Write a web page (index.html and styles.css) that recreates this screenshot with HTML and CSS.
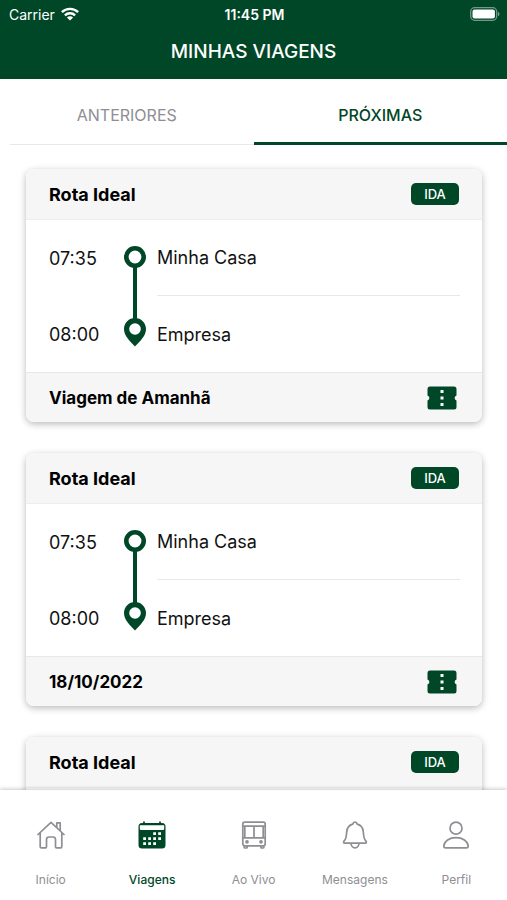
FILE: index.html
```html
<!DOCTYPE html>
<html lang="pt-BR">
<head>
  <meta charset="UTF-8">
  <title>Minhas Viagens</title>
  <meta name="viewport" content="width=device-width, initial-scale=1">
  <link rel="stylesheet" href="styles.css">
</head>
<body>
  <!-- shared icons -->
  <svg class="sprite" aria-hidden="true">
    <symbol id="trajeto" viewBox="0 0 22 102">
      <path d="M11 20v56" fill="none" stroke="currentColor" stroke-width="4"/>
      <circle cx="11" cy="12" r="8.7" fill="#fff" stroke="currentColor" stroke-width="4.6"/>
      <path d="M11 73C5 73 0 77.800 0 84c0 7 6 12 11 17.500C16 96 22 91 22 84c0-6.200-5-11-11-11z" fill="currentColor"/>
      <circle cx="11" cy="84" r="5.800" fill="#fff"/>
    </symbol>
    <symbol id="bilhete" viewBox="0 0 30 24">
      <path d="M3 .5h24a2.500 2.500 0 0 1 2.500 2.500v6.500a2.600 2.600 0 0 0 0 5V21a2.500 2.500 0 0 1-2.500 2.500H3A2.500 2.500 0 0 1 .5 21v-6.500a2.600 2.600 0 0 0 0-5V3A2.500 2.500 0 0 1 3 .5z" fill="currentColor"/>
      <path d="M13.500 4h3v3h-3zM13.500 10.500h3v3h-3zM13.500 17h3v3h-3z" fill="#fff"/>
    </symbol>
  </svg>

  <header class="topo">
    <div class="status">
      <span class="operadora">Carrier
        <svg class="wifi" viewBox="0 0 18 14" aria-hidden="true">
          <g fill="none" stroke="currentColor" stroke-width="2.400">
            <path d="M.9 5.200a11.500 11.500 0 0 1 16.200 0"/>
            <path d="M3.900 8.400a7.200 7.200 0 0 1 10.200 0"/>
          </g>
          <path d="M9 13.600 5.900 10.500a4.400 4.400 0 0 1 6.200 0z" fill="currentColor"/>
        </svg>
      </span>
      <span class="hora">11:45 PM</span>
      <svg class="bateria" viewBox="0 0 30 14" aria-hidden="true">
        <rect x=".7" y=".7" width="26" height="12.600" rx="4" fill="none" stroke="#fff" stroke-opacity=".45" stroke-width="1.300"/>
        <rect x="2.500" y="2.500" width="22.400" height="9" rx="2" fill="#fff"/>
        <path d="M28 4.800c2 .8 2 3.600 0 4.400z" fill="#fff" fill-opacity=".5"/>
      </svg>
    </div>
    <h1>MINHAS VIAGENS</h1>
  </header>

  <div class="abas" role="tablist">
    <button class="aba" role="tab" aria-selected="false">ANTERIORES</button>
    <button class="aba ativa" role="tab" aria-selected="true">PRÓXIMAS</button>
  </div>

  <main class="viagens">
    <article class="card">
      <div class="card-topo">
        <h2>Rota Ideal</h2>
        <span class="tag">IDA</span>
      </div>
      <div class="rota">
        <div class="horas"><span>07:35</span><span>08:00</span></div>
        <svg class="trajeto" aria-hidden="true"><use href="#trajeto"/></svg>
        <div class="locais"><span>Minha Casa</span><span>Empresa</span></div>
      </div>
      <div class="card-base">
        <strong>Viagem de Amanhã</strong>
        <button class="bilhete" aria-label="Ver bilhete"><svg><use href="#bilhete"/></svg></button>
      </div>
    </article>

    <article class="card">
      <div class="card-topo">
        <h2>Rota Ideal</h2>
        <span class="tag">IDA</span>
      </div>
      <div class="rota">
        <div class="horas"><span>07:35</span><span>08:00</span></div>
        <svg class="trajeto" aria-hidden="true"><use href="#trajeto"/></svg>
        <div class="locais"><span>Minha Casa</span><span>Empresa</span></div>
      </div>
      <div class="card-base">
        <strong>18/10/2022</strong>
        <button class="bilhete" aria-label="Ver bilhete"><svg><use href="#bilhete"/></svg></button>
      </div>
    </article>

    <article class="card">
      <div class="card-topo">
        <h2>Rota Ideal</h2>
        <span class="tag">IDA</span>
      </div>
      <div class="rota"></div>
    </article>
  </main>

  <nav class="menu">
    <a href="#inicio">
      <svg viewBox="0 0 28 28" aria-hidden="true">
        <path d="M1 13.500 14 1.300l13 12.200M3.200 12v13.800a1 1 0 0 0 1 1h4.300a1 1 0 0 0 1-1v-7.300a2.500 2.500 0 0 1 2.500-2.500h4a2.500 2.500 0 0 1 2.500 2.500v7.300a1 1 0 0 0 1 1h4.300a1 1 0 0 0 1-1V12M19.800 6.500V1.900h3.400v7.800"/>
      </svg>
      Início
    </a>
    <a href="#viagens" class="ativo" aria-current="page">
      <svg viewBox="0 0 28 28" aria-hidden="true">
        <rect x=".5" y="2" width="27" height="25.500" rx="3.500" fill="currentColor" stroke="none"/>
        <path d="M6 1v3M22 1v3"/>
        <path d="M1.800 4.300h24.400v3.500q0 1.200-1.200 1.200H3q-1.200 0-1.200-1.200z" fill="#fff" stroke="none"/>
        <path d="M15.200 11.300H18v2.800h-2.800zM20.200 11.300H23v2.800h-2.800zM5.200 16.300H8v2.800H5.200zM10.200 16.300H13v2.800h-2.800zM15.200 16.300H18v2.800h-2.800zM20.200 16.300H23v2.800h-2.800zM5.200 21.300H8v2.800H5.200zM10.200 21.300H13v2.800h-2.800zM15.200 21.300H18v2.800h-2.800z" fill="#fff" stroke="none"/>
      </svg>
      Viagens
    </a>
    <a href="#aovivo">
      <svg viewBox="0 0 28 28" aria-hidden="true">
        <rect x="2.800" y="1.200" width="22.400" height="23.600" rx="2"/>
        <path d="M2.800 5.200h22.400M4.800 5.200v11.600M23.200 5.200v11.600M14 5.200v11.600M2.800 16.800h22.400M4.200 25v1.300q0 .7.700.7h1.600q.7 0 .7-.7V25M20.800 25v1.300q0 .7.700.7h1.600q.7 0 .7-.7V25"/>
        <circle cx="7" cy="20.800" r="1"/>
        <circle cx="21" cy="20.800" r="1"/>
      </svg>
      Ao Vivo
    </a>
    <a href="#mensagens">
      <svg viewBox="0 0 28 28" aria-hidden="true">
        <path d="M14 1.200c-1.300 0-2 .8-2.200 1.900C8 4 6 7 5.700 11c-.3 5-.6 7.300-2.600 9-.8.700-.6 2.200.6 2.200h20.600c1.200 0 1.400-1.500.6-2.200-2-1.700-2.300-4-2.600-9-.3-4-2.300-7-6.100-7.900-.2-1.100-.9-1.900-2.200-1.900zM10 22.300a4 4.500 0 0 0 8 0"/>
      </svg>
      Mensagens
    </a>
    <a href="#perfil">
      <svg viewBox="0 0 28 28" aria-hidden="true">
        <circle cx="14" cy="7.200" r="6"/>
        <path d="M3.600 26.800h20.800q1.800 0 1.800-1.800C25.800 20 20.500 16.600 14 16.600S2.200 20 1.800 25q0 1.800 1.800 1.800z"/>
      </svg>
      Perfil
    </a>
  </nav>
</body>
</html>
```
FILE: styles.css
```css
* { box-sizing: border-box; }
body { margin: 0; height: 100vh; display: flex; flex-direction: column; background: #fff; color: #111; font-family: Inter, "Liberation Sans", sans-serif; }
h1, h2 { margin: 0; }
button { border: 0; padding: 0; background: none; font-family: inherit; cursor: pointer; }
.sprite { display: none; }

.topo { flex: none; background: #004727; color: #fff; padding-bottom: 15px; }
.status { display: grid; grid-template-columns: 1fr auto 1fr; align-items: center; height: 28px; padding: 0 7px 0 9px; font-size: 14px; }
.operadora { display: flex; align-items: center; gap: 6px; }
.wifi { width: 18px; height: 14px; }
.hora { font-size: 14px; font-weight: 600; }
.bateria { width: 30px; height: 14px; justify-self: end; }
h1 { padding-top: 12px; font-size: 19px; font-weight: 500; line-height: 24px; text-align: center; }

.abas { flex: none; display: flex; height: 66px; }
.aba { flex: 1; padding: 6px 10px 0 0; margin-left: 10px; font-size: 16px; color: #8e8e93; border-bottom: 1px solid #e8e8e8; }
.ativa { flex: 0 0 50%; margin: 0; padding: 8px 0 0; color: #004727; border-bottom: 3px solid #004727; font-weight: 500; }

.viagens { flex: 1; min-height: 0; overflow: hidden; display: flex; flex-direction: column; gap: 31px; padding: 24px 25px 0 26px; }
.card { flex: none; border-radius: 8px; background: #fff; box-shadow: 0 2px 7px rgba(0,0,0,0.28); overflow: hidden; }
.card-topo, .card-base { display: flex; align-items: center; justify-content: space-between; padding: 0 23px; background: #f6f6f6; }
.card-topo { height: 51px; border-bottom: 1px solid #eee; }
.card-base { height: 50px; border-top: 1px solid #e8e8e8; }
h2 { font-size: 18px; font-weight: 700; color: #000; }
.card-base strong { font-size: 17px; font-weight: 700; color: #000; }
.tag { width: 48px; border-radius: 5px; background: #004727; color: #fff; font-size: 13px; font-weight: 500; line-height: 22px; text-align: center; }

.rota { display: flex; align-items: center; min-height: 152px; padding: 0 22px 0 23px; font-size: 18px; }
.horas { width: 75px; }
.horas span, .locais span { display: flex; align-items: center; height: 76px; }
.trajeto { width: 22px; height: 102px; color: #004727; }
.locais { flex: 1; margin-left: 11px; }
.locais span:first-child { border-bottom: 1px solid #e8e8e8; }
.bilhete { width: 30px; height: 24px; margin-right: 2px; color: #004727; }
.bilhete svg { display: block; width: 30px; height: 24px; }

.menu { flex: none; display: flex; height: 110px; padding-top: 31px; background: #fff; box-shadow: 0 -1px 4px rgba(0,0,0,0.22); position: relative; }
.menu a { flex: 1; display: flex; flex-direction: column; align-items: center; gap: 23px; color: #8e8e93; font-size: 12px; line-height: 16px; text-decoration: none; }
.menu svg { width: 28px; height: 28px; fill: none; stroke: currentColor; stroke-width: 1.7; stroke-linecap: round; stroke-linejoin: round; }
.menu .ativo { color: #004727; font-weight: 500; }
```
